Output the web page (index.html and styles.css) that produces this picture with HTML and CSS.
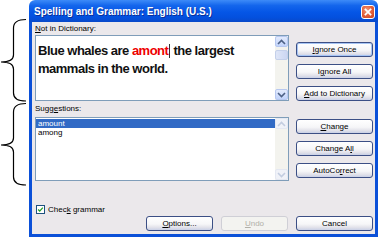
FILE: index.html
```html
<!DOCTYPE html>
<html>
<head>
<meta charset="utf-8">
<link rel="stylesheet" href="styles.css">
</head>
<body>
<div class="page">
  <svg class="braces" width="29" height="240" viewBox="0 0 29 240">
    <path d="M26,19.5 Q13.5,19.5 13.5,28 L13.5,55 Q13.5,62 1,62 Q13.5,62 13.5,69 L13.5,93 Q13.5,101 26,101" fill="none" stroke="#000" stroke-width="1.2"/>
    <path d="M26,103.5 Q13.5,103.5 13.5,112 L13.5,138 Q13.5,145 1,145 Q13.5,145 13.5,152 L13.5,177 Q13.5,185 26,185" fill="none" stroke="#000" stroke-width="1.2"/>
  </svg>
  <div class="dialog">
    <div class="titlebar">
      <span class="title">Spelling and Grammar: English (U.S.)</span>
      <span class="close">
        <svg width="14" height="14" viewBox="0 0 14 14"><path d="M4,4 L10,10 M10,4 L4,10" stroke="#fff" stroke-width="2" stroke-linecap="square"/></svg>
      </span>
    </div>
    <div class="body">
      <div class="label"><u>N</u>ot in Dictionary:</div>
      <div class="row row1">
        <div class="textbox">
          <div class="text">Blue whales are <span class="err">amont</span><span class="caret"></span> the largest<br>mammals in the world.</div>
          <div class="scroll">
            <span class="arrow"><svg width="9" height="6" viewBox="0 0 9 6"><path d="M1,5 L4.5,1.5 L8,5" fill="none" stroke="#4d6185" stroke-width="1.6"/></svg></span>
            <span class="track"><span class="thumb"></span></span>
            <span class="arrow"><svg width="9" height="6" viewBox="0 0 9 6"><path d="M1,1 L4.5,4.5 L8,1" fill="none" stroke="#4d6185" stroke-width="1.6"/></svg></span>
          </div>
        </div>
        <div class="btns">
          <button class="btn default"><u>I</u>gnore Once</button>
          <button class="btn">I<u>g</u>nore All</button>
          <button class="btn"><u>A</u>dd to Dictionary</button>
        </div>
      </div>
      <div class="label label2">Sugg<u>e</u>stions:</div>
      <div class="row row2">
        <div class="list">
          <div class="items">
            <div class="item sel">amount</div>
            <div class="item">among</div>
          </div>
          <div class="scroll disabled">
            <span class="arrow"><svg width="9" height="6" viewBox="0 0 9 6"><path d="M1,5 L4.5,1.5 L8,5" fill="none" stroke="#c3cde0" stroke-width="1.6"/></svg></span>
            <span class="track"></span>
            <span class="arrow"><svg width="9" height="6" viewBox="0 0 9 6"><path d="M1,1 L4.5,4.5 L8,1" fill="none" stroke="#c3cde0" stroke-width="1.6"/></svg></span>
          </div>
        </div>
        <div class="btns btns2">
          <button class="btn"><u>C</u>hange</button>
          <button class="btn">Change A<u>l</u>l</button>
          <button class="btn">AutoCo<u>r</u>rect</button>
        </div>
      </div>
      <div class="check">
        <span class="box"><svg width="9" height="9" viewBox="0 0 9 9"><path d="M1.5,4.5 L3.5,6.5 L7.5,2" fill="none" stroke="#21a121" stroke-width="1.6"/></svg></span>
        <span>Chec<u>k</u> grammar</span>
      </div>
      <div class="bottom">
        <button class="btn small"><u>O</u>ptions...</button>
        <button class="btn small disabledbtn"><u>U</u>ndo</button>
        <button class="btn">Cancel</button>
      </div>
    </div>
  </div>
</div>
</body>
</html>
```

FILE: styles.css
```css
html, body {
  margin: 0;
  padding: 0;
  background: #ffffff;
}

.page {
  display: flex;
  width: 381px;
  height: 240px;
  font-family: "Liberation Sans", Arial, sans-serif;
}

.braces {
  flex: 0 0 29px;
  display: block;
}

.dialog {
  width: 349px;
  height: 237px;
  display: flex;
  flex-direction: column;
}

.titlebar {
  height: 22px;
  flex: 0 0 22px;
  border-radius: 6px 6px 0 0;
  background: linear-gradient(#3d8bf8 0%, #1466ec 25%, #0556e6 55%, #0350de 80%, #0a49c9 100%);
  display: flex;
  align-items: center;
  justify-content: space-between;
  padding: 0 3px 0 5px;
  box-sizing: border-box;
}

.title {
  color: #ffffff;
  font-weight: bold;
  font-size: 10px;
  letter-spacing: 0;
  text-shadow: 1px 1px 0 #0a2f9a;
  margin-top: 1px;
}

.close {
  width: 14px;
  height: 14px;
  box-sizing: border-box;
  border: 1px solid #ffffff;
  border-radius: 3px;
  background: radial-gradient(circle at 40% 35%, #f19a7a 0%, #e2603c 50%, #c8401c 100%);
  display: flex;
  align-items: center;
  justify-content: center;
  margin-top: 1px;
}

.close svg {
  display: block;
}

.body {
  flex: 1;
  background: #ebe8eb;
  border: 3px solid #0b50d8;
  border-top: none;
  padding: 2px 2px 3px 3px;
  display: flex;
  flex-direction: column;
  font-size: 8px;
  color: #000;
}

.label {
  height: 10px;
  line-height: 10px;
  font-size: 8px;
}

.label2 {
  margin-top: 3px;
}

.row {
  display: flex;
  gap: 7px;
}

.row1 {
  margin-top: 1px;
  height: 66px;
}

.row2 {
  margin-top: 3px;
  height: 64px;
}

.textbox, .list {
  width: 255px;
  box-sizing: border-box;
  border: 1px solid #7f9db9;
  background: #ffffff;
  display: flex;
}

.text {
  flex: 1;
  padding: 6px 2px 0 2px;
  font-family: "Liberation Sans", Arial, sans-serif;
  font-weight: bold;
  font-size: 13px;
  line-height: 18px;
  letter-spacing: -0.5px;
  color: #111;
}

.err {
  color: #ee0000;
}

.caret {
  display: inline-block;
  width: 1px;
  height: 14px;
  background: #333;
  vertical-align: -3px;
  margin-left: 1px;
}

.scroll {
  width: 13px;
  display: flex;
  flex-direction: column;
  background: #f3f3ee;
}

.arrow {
  height: 11px;
  box-sizing: border-box;
  border: 1px solid #b7c8f0;
  border-radius: 2px;
  background: linear-gradient(#e3ebfd, #c1d3fb);
  display: flex;
  align-items: center;
  justify-content: center;
}

.arrow svg {
  display: block;
}

.track {
  flex: 1;
  padding-top: 3px;
}

.thumb {
  display: block;
  height: 8px;
  margin: 0 0;
  border: 1px solid #c4d0ea;
  border-radius: 2px;
  background: linear-gradient(90deg, #dfe6f7, #cbd6f2);
}

.scroll.disabled .arrow {
  border-color: #e4e8f2;
  background: #f0f2f8;
}

.items {
  flex: 1;
  padding-top: 1px;
}

.item {
  height: 9px;
  line-height: 9px;
  font-size: 8px;
  padding-left: 2px;
}

.item.sel {
  background: #316ac5;
  color: #ffffff;
}

.btns {
  display: flex;
  flex-direction: column;
  gap: 7px;
  padding-top: 7px;
}

.btns2 {
  padding-top: 2px;
}

.btn {
  width: 77px;
  height: 15px;
  box-sizing: border-box;
  border: 1px solid #3c4f85;
  border-radius: 3px;
  background: linear-gradient(#ffffff 0%, #f6f6f8 55%, #e2e2ea 80%, #c9d0e6 100%);
  font-family: "Liberation Sans", Arial, sans-serif;
  font-size: 8px;
  line-height: 13px;
  padding: 0;
  color: #000;
  text-align: center;
  display: block;
}

.btn.default {
  box-shadow: inset 0 0 0 1px #a6c4f4;
}

.btn.small {
  width: 67px;
}

.btn.disabledbtn {
  border-color: #cfcfd6;
  background: #f3f3f0;
  color: #b2b0a8;
}

.check {
  margin-top: 23px;
  height: 11px;
  display: flex;
  align-items: center;
  gap: 3px;
  padding-left: 1px;
  font-size: 8px;
}

.box {
  width: 9px;
  height: 9px;
  box-sizing: border-box;
  border: 1px solid #1c5180;
  background: #ffffff;
  display: flex;
  align-items: center;
  justify-content: center;
}

.box svg {
  display: block;
  width: 7px;
  height: 7px;
}

.bottom {
  margin-top: 1px;
  display: flex;
  justify-content: flex-end;
  gap: 8px;
  padding-right: 0;
}
```
